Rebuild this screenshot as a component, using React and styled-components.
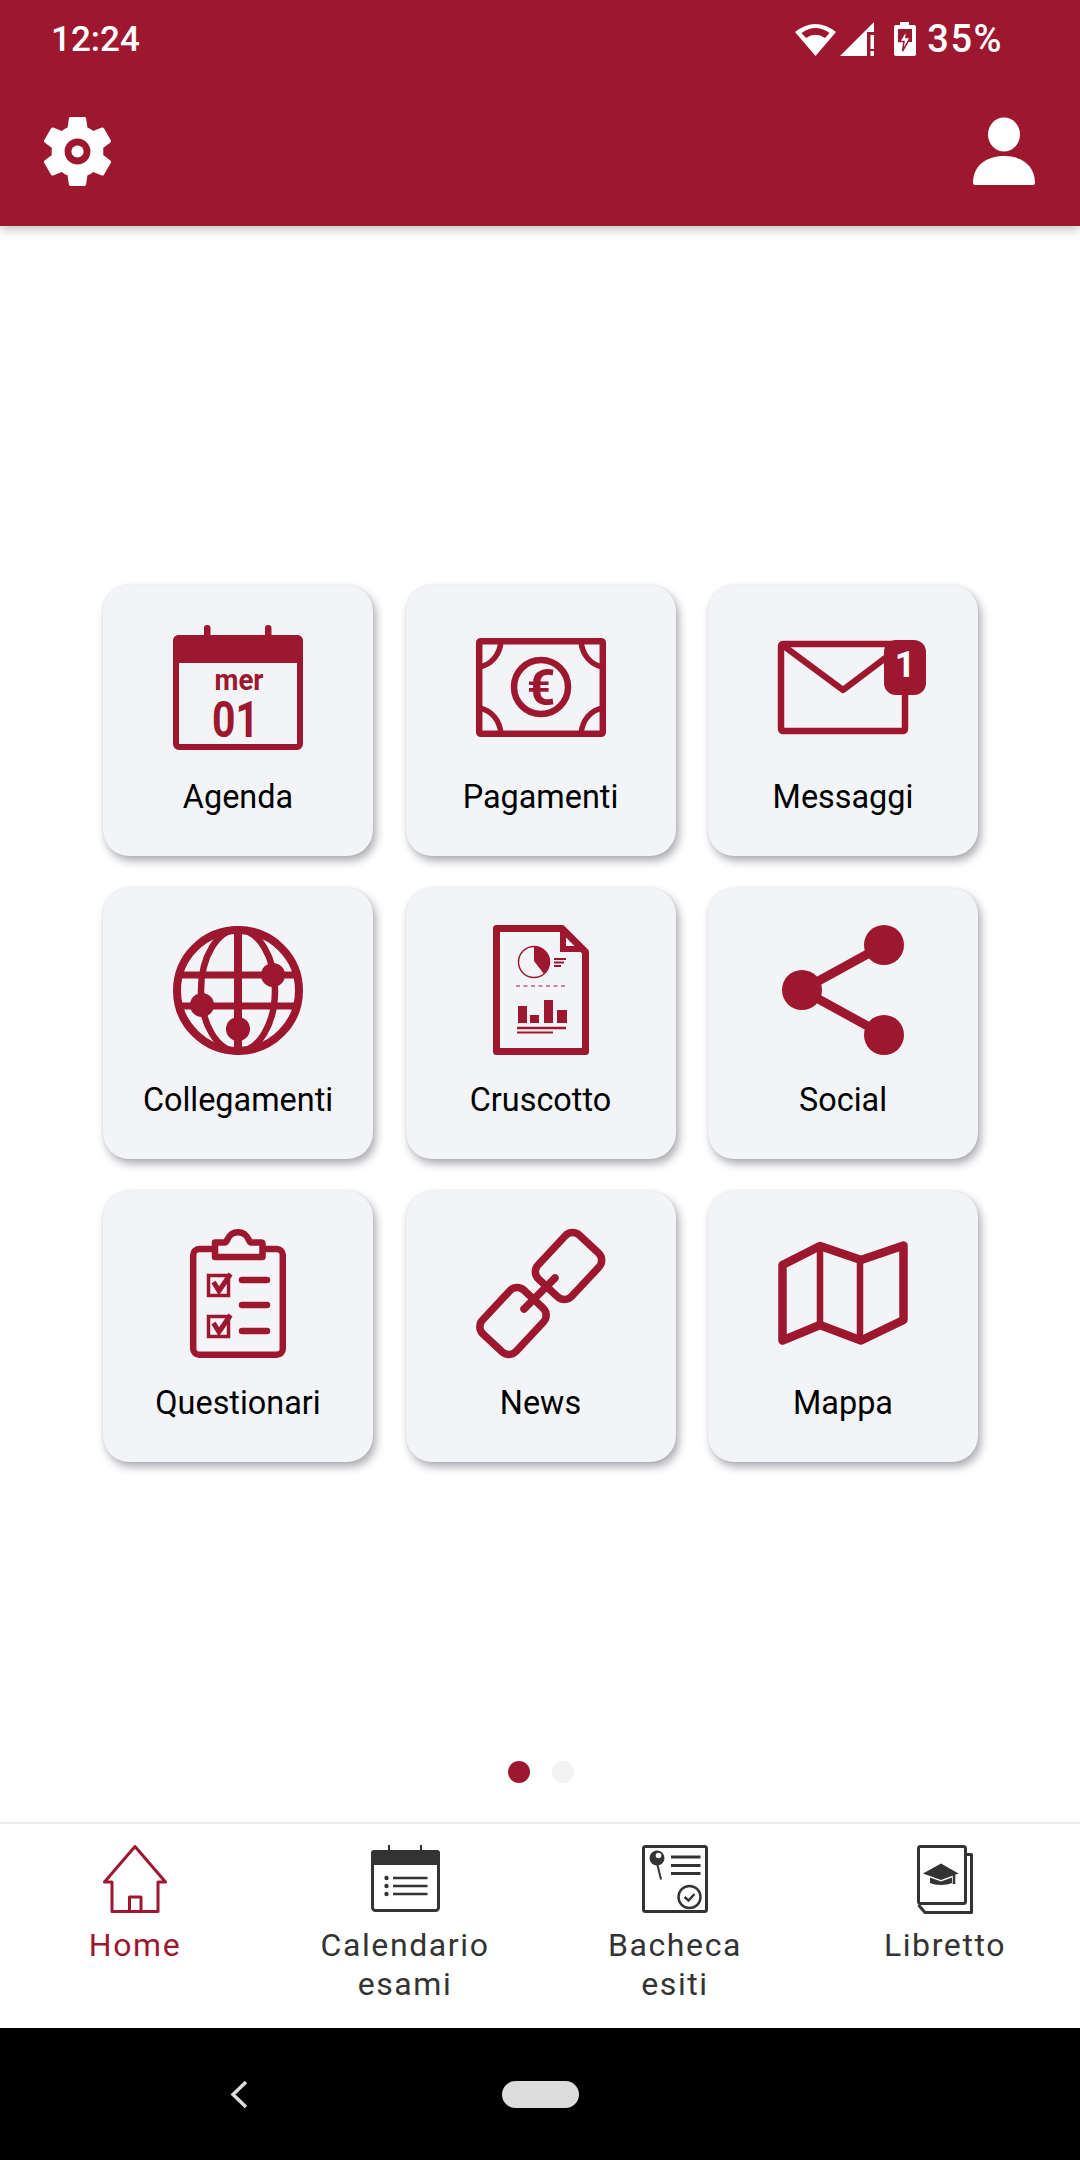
import React from "react";
import styled, { createGlobalStyle } from "styled-components";

const RED = "#9d172f";
const DARK = "#333333";
const CARD = "#f3f4f8";

const Global = createGlobalStyle`
  html, body { margin: 0; padding: 0; background: #fff; }
  * { box-sizing: border-box; }
  #root { width: 1080px; height: 2160px; }
`;

const Page = styled.div`
  width: 1080px; height: 2160px; display: flex; flex-direction: column;
  font-family: Roboto, "Liberation Sans", sans-serif; background: #fff; overflow: hidden;
`;
const Header = styled.header`
  height: 226px; background: ${RED}; color: #fff; flex: none;
  box-shadow: 0 3px 11px rgba(0,0,0,.26); position: relative; z-index: 1;
`;
const StatusBar = styled.div`
  height: 78px; padding: 19px 77px 0 51px; display: flex; justify-content: space-between; align-items: flex-start;
`;
const StatusText = styled.span`
  font-size: ${p => p.$size || 35}px; line-height: 41px; font-weight: 500; letter-spacing: ${p => p.$spacing || 0}px;
  margin-top: ${p => p.$lift || 0}px;
`;
const StatusIcons = styled.div`
  display: flex; align-items: flex-start; margin-top: 3px;
`;
const StatusIcon = styled.svg`
  display: block; flex: none; margin-right: ${p => p.$gap || 0}px;
`;
const Toolbar = styled.div`
  display: flex; justify-content: space-between; padding: 39px 45px 0 43px;
`;
const Main = styled.main`
  flex: 1; display: flex; flex-direction: column; align-items: center; padding: 359px 0 0 1px;
`;
const Grid = styled.div`
  display: grid; grid-template-columns: repeat(3, 270px); grid-auto-rows: 271px; column-gap: 32.5px; row-gap: 32px;
`;
const Card = styled.div`
  background: ${CARD}; border-radius: 26px; padding-top: 37px;
  box-shadow: 3px 5px 8px rgba(40,40,60,.38), 0 0 2px rgba(40,40,60,.12);
  display: flex; flex-direction: column; align-items: center;
`;
const IconBox = styled.div`
  height: 130px; display: flex; align-items: center; justify-content: center;
`;
const CardLabel = styled.span`
  margin-top: 25px; font-size: 32.4px; line-height: 40px; color: #000;
`;
const Dots = styled.div`
  display: flex; gap: 22px; margin-top: 299px;
`;
const Dot = styled.span`
  width: 22px; height: 22px; border-radius: 50%; background: ${p => (p.$on ? RED : "#f3f3f3")};
`;
const Nav = styled.nav`
  height: 206px; flex: none; border-top: 2px solid #ececec; display: grid; grid-template-columns: repeat(4, 270px);
`;
const NavItem = styled.div`
  display: flex; flex-direction: column; align-items: center; padding-top: 21px;
  color: ${p => (p.$on ? RED : DARK)};
`;
const NavIcon = styled.div`
  height: 68px; display: flex; align-items: flex-start; justify-content: center;
`;
const NavLabel = styled.span`
  margin-top: 13px; font-size: 32px; line-height: 39px; letter-spacing: 1.6px; text-align: center; white-space: pre-line;
`;
const SystemBar = styled.div`
  height: 132px; flex: none; background: #000; display: flex; align-items: center; padding-left: 231px; gap: 255px;
`;
const Pill = styled.span`
  width: 77px; height: 27px; border-radius: 14px; background: #dcdcdc;
`;
const Svg = styled.svg`
  display: block; overflow: visible;
`;

const Agenda = () => (
  <Svg width="130" height="125" viewBox="0 0 130 125">
    <rect x="31" y="0" width="6.5" height="14" rx="3" fill={RED} />
    <rect x="92" y="0" width="6.5" height="14" rx="3" fill={RED} />
    <rect x="3" y="13" width="124" height="109" rx="3" fill="none" stroke={RED} strokeWidth="6" />
    <path d="M0 38V16a6 6 0 0 1 6-6h118a6 6 0 0 1 6 6v22z" fill={RED} />
    <text x="41.500" y="65" fontFamily="Roboto" fontWeight="700" fontSize="29" fill={RED} textLength="49" lengthAdjust="spacingAndGlyphs">mer</text>
    <text x="39" y="112" fontFamily="Roboto" fontWeight="700" fontSize="50" fill={RED} textLength="47" lengthAdjust="spacingAndGlyphs">01</text>
  </Svg>
);
const Money = () => (
  <Svg width="130" height="99" viewBox="0 0 130 99" fill="none" stroke={RED} strokeWidth="6.5">
    <rect x="3.2" y="3.2" width="123.6" height="92.6" rx="1.5" />
    <path d="M3 29C15 27 24 17 25 3M127 29C115 27 106 17 105 3M3 70C15 72 24 82 25 96M127 70C115 72 106 82 105 96" strokeWidth="5.5" />
    <circle cx="65" cy="49" r="27" strokeWidth="6.500" />
    <text x="65" y="67" textAnchor="middle" fontFamily="Roboto" fontWeight="700" fontSize="50" fill={RED} stroke="none">€</text>
  </Svg>
);
const Mail = () => (
  <Svg width="130" height="94" viewBox="0 0 130 94" fill="none" stroke={RED} strokeWidth="6.500" strokeLinejoin="round">
    <rect x="3" y="4" width="124" height="87" rx="2" />
    <path d="M3 4L65 50L110 16" />
    <rect x="106" y="0" width="42" height="55" rx="12" fill={RED} stroke="none" />
    <text x="127" y="37" textAnchor="middle" fontFamily="Roboto" fontWeight="700" fontSize="36" fill="#fff" stroke="none">1</text>
  </Svg>
);
const Globe = () => (
  <Svg width="130" height="129" viewBox="0 0 130 129" fill="none" stroke={RED} strokeWidth="7">
    <ellipse cx="65" cy="64.5" rx="61" ry="60.5" strokeWidth="8" />
    <ellipse cx="65" cy="64.5" rx="37" ry="61" strokeWidth="6.5" />
    <path d="M65 3V126" strokeWidth="8" />
    <path d="M8 49H122M8 80H122" strokeWidth="7" />
    <g fill={RED} stroke="none">
      <circle cx="100" cy="49" r="12" />
      <circle cx="29" cy="79" r="12" />
      <circle cx="65" cy="103" r="12" />
    </g>
  </Svg>
);
const Report = () => (
  <Svg width="96" height="130" viewBox="0 0 96 130" fill="none" stroke={RED}>
    <path d="M3.5 3.5H69L92.500 27V126.500H3.500Z" strokeWidth="7" strokeLinejoin="round" />
    <path d="M70 4V24H92" strokeWidth="6" />
    <circle cx="41" cy="37" r="15.500" strokeWidth="1.500" />
    <path d="M41 21.500A15.500 15.500 0 0 1 56 40A16 16 0 0 1 51 49L41 36Z" fill={RED} stroke="none" />
    <path d="M61 34H73M61 37.500H71M61 41H68" strokeWidth="2" />
    <path d="M23 61H72" strokeWidth="1" strokeDasharray="4 3.500" />
    <g fill={RED} stroke="none">
      <rect x="25" y="81" width="9" height="17" />
      <rect x="37" y="90" width="9" height="8" />
      <rect x="51" y="75" width="9" height="23" />
      <rect x="64" y="85" width="10" height="13" />
    </g>
    <path d="M24 103H73" strokeWidth="2.500" />
    <path d="M24 107.500H60" strokeWidth="2" />
  </Svg>
);
const Share = () => (
  <Svg width="122" height="130" viewBox="0 0 122 130">
    <path d="M20 65L102 20M20 65L102 110" stroke={RED} strokeWidth="9" fill="none" />
    <g fill={RED}>
      <circle cx="20" cy="65" r="20" />
      <circle cx="102" cy="20" r="20" />
      <circle cx="102" cy="110" r="20" />
    </g>
  </Svg>
);
const Clipboard = () => (
  <Svg width="96" height="129" viewBox="0 0 96 129" fill="none" stroke={RED} strokeWidth="6.500" strokeLinecap="round" strokeLinejoin="round">
    <rect x="3.200" y="20" width="89.600" height="105.800" rx="6" />
    <path d="M25 13.500H35C37.500 13.500 37.500 3.300 48 3.300S58.500 13.500 61 13.500H71Q72.500 13.500 72.500 15V28H25V15Q25 13.500 25 13.500Z" fill={CARD} />
    <rect x="18.500" y="46.500" width="20" height="20" strokeWidth="3.500" strokeLinejoin="miter" />
    <rect x="18.500" y="87.500" width="20" height="20" strokeWidth="3.500" strokeLinejoin="miter" />
    <path d="M23.500 53L29 62L40.500 45M23.500 94L29 103L40.500 86" strokeWidth="5" strokeLinecap="butt" strokeLinejoin="miter" />
    <path d="M52 51H77M52 76H77M52 102H77" />
  </Svg>
);
const LinkIcon = () => (
  <Svg width="130" height="129" viewBox="0 0 130 129" fill="none" stroke={RED} strokeWidth="7.500" strokeLinecap="round">
    <rect x="62.500" y="14" width="60" height="46" rx="10" transform="rotate(-47 92.500 37)" />
    <rect x="7" y="69" width="60" height="46" rx="10" transform="rotate(-47 37 92)" />
    <path d="M48 80L79 49" />
  </Svg>
);
const MapIcon = () => (
  <Svg width="130" height="104" viewBox="0 0 130 104" fill="none" stroke={RED} strokeWidth="8.500" strokeLinejoin="round">
    <path d="M4.500 24L42 5L83 19L125.500 4.500V79L83 99.500L42 84L4.500 99.500Z" />
    <path d="M42 5V84M82 19V100" strokeWidth="6.500" />
  </Svg>
);

const items = [
  ["Agenda", Agenda], ["Pagamenti", Money], ["Messaggi", Mail],
  ["Collegamenti", Globe], ["Cruscotto", Report], ["Social", Share],
  ["Questionari", Clipboard], ["News", LinkIcon], ["Mappa", MapIcon],
];

const HomeIcon = () => (
  <Svg width="64" height="68" viewBox="0 0 64 68" fill="none" stroke="currentColor" strokeWidth="3" strokeLinejoin="round">
    <path d="M32 1.500L1.500 37H9V66.500H55V37H62.500Z" />
    <path d="M26.500 66V52H38V66" />
  </Svg>
);
const CalIcon = () => (
  <Svg width="69" height="68" viewBox="0 0 69 68" fill="none" stroke="currentColor">
    <path d="M18 0V7M50 0V7" strokeWidth="2" />
    <rect x="1.500" y="6.500" width="66" height="59" rx="3" strokeWidth="3" />
    <path d="M0 20V8a3 3 0 0 1 3-3H66a3 3 0 0 1 3 3V20Z" fill="currentColor" stroke="none" />
    <path d="M22 33H56.500M22 41H56.500M22 49H56.500" strokeWidth="2.500" />
    <g fill="currentColor" stroke="none">
      <circle cx="15.500" cy="33" r="2.200" /><circle cx="15.500" cy="41" r="2.200" /><circle cx="15.500" cy="49" r="2.200" />
    </g>
  </Svg>
);
const BoardIcon = () => (
  <Svg width="66" height="68" viewBox="0 0 66 68" fill="none" stroke="currentColor">
    <rect x="1.500" y="1.500" width="63" height="65" rx="2" strokeWidth="3" />
    <path d="M15 18L19 34.500" strokeWidth="2" />
    <circle cx="15" cy="13" r="7.500" fill="currentColor" stroke="none" />
    <circle cx="16.500" cy="10.500" r="2.800" fill="#fff" stroke="none" />
    <path d="M29 12H58.500M29 20.500H58.500M29 28.500H58.500" strokeWidth="3" />
    <circle cx="47.500" cy="52" r="11" strokeWidth="2.500" />
    <path d="M42.500 52L46.500 55.500L52.500 49" strokeWidth="2.500" />
  </Svg>
);
const BookIcon = () => (
  <Svg width="56" height="69" viewBox="0 0 56 69" fill="none" stroke="currentColor">
    <rect x="1.500" y="1.500" width="47" height="57" rx="2" strokeWidth="3" />
    <path d="M49 9.500H54.500V67.500H8L1.500 60" strokeWidth="3" strokeLinejoin="round" />
    <path d="M24 18.500L41.500 28.500L24 35L6 28.500Z" fill="currentColor" stroke="none" />
    <path d="M13 32.500L24 36.500L35 32.500V38C30 40.500 18 40.500 13 38Z" fill="currentColor" stroke="none" />
    <path d="M37 29V39" strokeWidth="2.500" />
  </Svg>
);

const navItems = [
  ["Home", HomeIcon, true], ["Calendario\nesami", CalIcon], ["Bacheca\nesiti", BoardIcon], ["Libretto", BookIcon],
];

const GEAR = "M19.14 12.94c.04-.3.06-.61.06-.94 0-.32-.02-.64-.07-.94l2.03-1.58c.18-.14.23-.41.12-.61l-1.92-3.32c-.12-.22-.37-.29-.59-.22l-2.39.96c-.5-.38-1.03-.7-1.62-.94l-.36-2.54c-.04-.24-.24-.41-.48-.41h-3.84c-.24 0-.43.17-.47.41l-.36 2.54c-.59.24-1.13.57-1.62.94l-2.39-.96c-.22-.08-.47 0-.59.22L2.74 8.87c-.12.21-.08.47.12.61l2.03 1.58c-.05.3-.09.63-.09.94s.02.64.07.94l-2.03 1.58c-.18.14-.23.41-.12.61l1.92 3.32c.12.22.37.29.59.22l2.39-.96c.5.38 1.03.7 1.62.94l.36 2.54c.05.24.24.41.48.41h3.84c.24 0 .44-.17.47-.41l.36-2.54c.59-.24 1.13-.56 1.62-.94l2.39.96c.22.08.47 0 .59-.22l1.92-3.32c.12-.22.07-.47-.12-.61l-2.01-1.58zM12 15.6c-1.98 0-3.6-1.62-3.6-3.6s1.62-3.6 3.6-3.6 3.6 1.62 3.6 3.6-1.62 3.6-3.6 3.6z";

export default function App() {
  return (
    <Page>
      <Global />
      <Header>
        <StatusBar>
          <StatusText>12:24</StatusText>
          <StatusIcons>
            <StatusIcon $gap={4} width="41" height="34" viewBox="0 0 41 34">
              <path d="M20.500 34L0 10Q20.500 -6 41 10Z" fill="#fff" />
              <path d="M6.500 11Q20.500 1 34.500 11L30 16Q20.500 9.500 11 16Z" fill={RED} />
            </StatusIcon>
            <StatusIcon $gap={20} width="34" height="34" viewBox="0 0 34 34">
              <path d="M0 34L34 0V10H27V34Z" fill="#fff" />
              <path d="M30.500 13H34V27H30.500ZM30.500 29H34V34H30.500Z" fill="#fff" />
            </StatusIcon>
            <StatusIcon $gap={11} width="22" height="34" viewBox="0 0 22 34">
              <rect x="6" y="0" width="9" height="5" fill="#fff" />
              <rect x="0" y="3" width="22" height="31" rx="2" fill="#fff" />
              <rect x="4" y="7" width="14" height="13" fill={RED} />
              <path d="M12.500 8L5.500 19.500H10L8.500 29L16.500 15.500H12Z" fill="#fff" stroke={RED} strokeWidth="1.500" />
            </StatusIcon>
            <StatusText $size={38} $spacing={1.5} $lift={-3}>35%</StatusText>
          </StatusIcons>
        </StatusBar>
        <Toolbar>
          <Svg width="69" height="69" viewBox="2.400 2.400 19.200 19.200">
            <path d={GEAR} fill="#fff" fillRule="evenodd" />
            <circle cx="12" cy="12" r="1.700" fill="#fff" />
          </Svg>
          <Svg width="62" height="69" viewBox="0 0 62 69">
            <ellipse cx="31" cy="17.500" rx="16" ry="17" fill="#fff" />
            <path d="M0 66C0 48 14 39 31 39S62 48 62 66Q62 68 60 68H2Q0 68 0 66Z" fill="#fff" />
          </Svg>
        </Toolbar>
      </Header>
      <Main>
        <Grid>
          {items.map(([label, Icon]) => (
            <Card key={label}>
              <IconBox><Icon /></IconBox>
              <CardLabel>{label}</CardLabel>
            </Card>
          ))}
        </Grid>
        <Dots><Dot $on /><Dot /></Dots>
      </Main>
      <Nav>
        {navItems.map(([label, Icon, on]) => (
          <NavItem key={label} $on={on}>
            <NavIcon><Icon /></NavIcon>
            <NavLabel>{label}</NavLabel>
          </NavItem>
        ))}
      </Nav>
      <SystemBar>
        <Svg width="16" height="27" viewBox="0 0 16 27" fill="none" stroke="#dcdcdc" strokeWidth="3.500">
          <path d="M15 1L2 13.500L15 26" />
        </Svg>
        <Pill />
      </SystemBar>
    </Page>
  );
}
